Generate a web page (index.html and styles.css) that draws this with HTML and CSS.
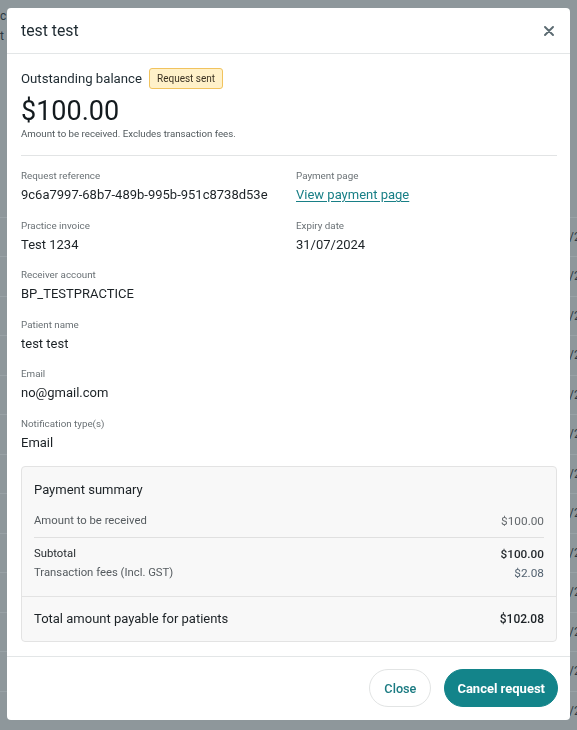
FILE: index.html
```html
<!DOCTYPE html>
<html lang="en">
<head>
<meta charset="utf-8">
<title>Payment request</title>
<link rel="stylesheet" href="styles.css">
</head>
<body>
<div class="page">
  <div class="page-top">
    <div class="page-line">c</div>
    <div class="page-line">t</div>
  </div>
  <div class="page-row"></div>
  <div class="page-row">/2</div>
  <div class="page-row">/2</div>
  <div class="page-row">/2</div>
  <div class="page-row">/2</div>
  <div class="page-row">/2</div>
  <div class="page-row">/2</div>
  <div class="page-row">/2</div>
  <div class="page-row">/2</div>
  <div class="page-row">/2</div>
  <div class="page-row">/2</div>
  <div class="page-row">/2</div>
  <div class="page-row">/2</div>
  <div class="page-row">/2</div>
</div>

<div class="overlay">
  <div class="modal">
    <div class="modal-header">
      <h2 class="modal-title">test test</h2>
      <button class="close-x" aria-label="Close">
        <svg width="10" height="10" viewBox="0 0 10 10"><path d="M1 1 L9 9 M9 1 L1 9" stroke="#5b6a71" stroke-width="1.9" stroke-linecap="round" fill="none"/></svg>
      </button>
    </div>
    <div class="modal-body">
      <div class="balance-row">
        <span class="balance-label">Outstanding balance</span>
        <span class="badge">Request sent</span>
      </div>
      <div class="amount">$100.00</div>
      <div class="amount-note">Amount to be received. Excludes transaction fees.</div>
      <div class="divider"></div>
      <div class="details">
        <div class="item">
          <div class="label">Request reference</div>
          <div class="value">9c6a7997-68b7-489b-995b-951c8738d53e</div>
        </div>
        <div class="item">
          <div class="label">Payment page</div>
          <div class="value"><a class="link" href="#">View payment page</a></div>
        </div>
        <div class="item">
          <div class="label">Practice invoice</div>
          <div class="value">Test 1234</div>
        </div>
        <div class="item">
          <div class="label">Expiry date</div>
          <div class="value">31/07/2024</div>
        </div>
        <div class="item col1">
          <div class="label">Receiver account</div>
          <div class="value">BP_TESTPRACTICE</div>
        </div>
        <div class="item col1">
          <div class="label">Patient name</div>
          <div class="value">test test</div>
        </div>
        <div class="item col1">
          <div class="label">Email</div>
          <div class="value">no@gmail.com</div>
        </div>
        <div class="item col1">
          <div class="label">Notification type(s)</div>
          <div class="value">Email</div>
        </div>
      </div>
      <div class="summary">
        <div class="summary-main">
          <h3 class="summary-title">Payment summary</h3>
          <div class="sum-row first">
            <span class="sum-label">Amount to be received</span>
            <span class="sum-amt">$100.00</span>
          </div>
          <div class="sum-divider"></div>
          <div class="sum-row sub">
            <span class="sum-label strong">Subtotal</span>
            <span class="sum-amt strong">$100.00</span>
          </div>
          <div class="sum-row fees">
            <span class="sum-label">Transaction fees (Incl. GST)</span>
            <span class="sum-amt blue">$2.08</span>
          </div>
        </div>
        <div class="summary-total">
          <span class="total-label">Total amount payable for patients</span>
          <span class="total-amt">$102.08</span>
        </div>
      </div>
    </div>
    <div class="modal-footer">
      <button class="btn btn-secondary">Close</button>
      <button class="btn btn-primary">Cancel request</button>
    </div>
  </div>
</div>
</body>
</html>
```

FILE: styles.css
```css
* { box-sizing: border-box; }

html, body { margin: 0; padding: 0; }

body {
  font-family: Roboto, "Liberation Sans", Arial, sans-serif;
  background: #8e979b;
  overflow: hidden;
  color: #1c2226;
}

/* page behind the backdrop */
.page {
  height: 730px;
  overflow: hidden;
  color: #2a3841;
  font-size: 12px;
}
.page-top {
  height: 178px;
  padding-top: 6px;
  padding-left: 0;
}
.page-line {
  line-height: 20px;
  white-space: nowrap;
}
.page-row {
  height: 39.5px;
  border-bottom: 1px solid #99a2a6;
  display: flex;
  align-items: center;
  padding-left: 569px;
  white-space: nowrap;
}

/* modal */
.overlay {
  position: fixed;
  inset: 0;
  padding: 8px 7px;
}
.modal {
  width: 563px;
  height: 712px;
  background: #ffffff;
  border-radius: 4px;
  display: flex;
  flex-direction: column;
  overflow: hidden;
}
.modal-header {
  height: 46px;
  flex: none;
  border-bottom: 1px solid #e3e6e7;
  display: flex;
  align-items: center;
  justify-content: space-between;
  padding: 0 16px 0 14px;
}
.modal-title {
  margin: 0;
  font-size: 15.8px;
  font-weight: 400;
  color: #1e2a31;
}
.close-x {
  border: 0;
  background: none;
  padding: 0;
  width: 10px;
  height: 10px;
  display: flex;
}

.modal-body {
  flex: 1;
  padding: 13px 13px 14px 14px;
}
.balance-row {
  display: flex;
  align-items: center;
  gap: 7px;
  height: 22px;
}
.balance-label {
  font-size: 13.2px;
  color: #1e2a31;
}
.badge {
  font-size: 10px;
  line-height: 19px;
  height: 21px;
  padding: 0 7px;
  background: #fff1c9;
  border: 1px solid #f1c35e;
  border-radius: 3px;
  color: #3b3222;
}
.amount {
  margin-top: 7px;
  font-size: 27px;
  line-height: 31px;
  color: #131a1e;
}
.amount-note {
  font-size: 9.7px;
  line-height: 14px;
  color: #50585c;
}
.divider {
  margin-top: 14px;
  height: 1px;
  background: #e2e4e5;
}

.details {
  margin-top: 13px;
  display: grid;
  grid-template-columns: 1fr 1fr;
  column-gap: 14px;
  row-gap: 14.5px;
}
.col1 { grid-column: 1; }
.label {
  font-size: 9.8px;
  line-height: 14px;
  color: #6a7175;
  margin-bottom: 3px;
}
.value {
  font-size: 13px;
  line-height: 18px;
  color: #1c2226;
  white-space: nowrap;
}
.link {
  color: #187f86;
  text-decoration: underline;
  text-underline-offset: 2px;
}

.summary {
  margin-top: 14.5px;
  border: 1px solid #e3e3e3;
  border-radius: 4px;
  background: #f8f8f8;
}
.summary-main {
  padding: 14px 12px 15px;
  border-bottom: 1px solid #e3e3e3;
}
.summary-title {
  margin: 0;
  font-size: 13px;
  line-height: 18px;
  font-weight: 400;
  color: #1c2226;
}
.sum-row {
  display: flex;
  justify-content: space-between;
  align-items: center;
  line-height: 16px;
}
.sum-row.first { margin-top: 14px; }
.sum-row.sub { margin-top: 8px; }
.sum-row.fees { margin-top: 3px; }
.sum-label {
  font-size: 11.3px;
  color: #555b5f;
}
.sum-amt {
  font-size: 11.8px;
  color: #64696d;
}
.sum-label.strong, .sum-amt.strong { color: #262b2f; }
.sum-amt.strong { font-weight: 500; }
.sum-amt.blue { color: #536270; }
.sum-divider {
  margin-top: 8px;
  height: 1px;
  background: #e0e0e0;
}
.summary-total {
  padding: 13px 12px;
  display: flex;
  justify-content: space-between;
  align-items: center;
  line-height: 18px;
}
.total-label {
  font-size: 13px;
  color: #1c2226;
}
.total-amt {
  font-size: 12px;
  font-weight: 500;
  color: #1c2226;
}

.modal-footer {
  height: 64px;
  flex: none;
  border-top: 1px solid #e3e6e7;
  display: flex;
  justify-content: flex-end;
  align-items: flex-start;
  gap: 13px;
  padding: 12px 12px 0;
}
.btn {
  height: 38px;
  border-radius: 19px;
  font-family: inherit;
  font-size: 12.7px;
  cursor: pointer;
}
.btn-secondary {
  background: #ffffff;
  border: 1px solid #e2e4e4;
  color: #1b7b82;
  padding: 0 14px;
  font-weight: 500;
}
.btn-primary {
  background: #13848a;
  border: 1px solid #13848a;
  color: #ffffff;
  padding: 0 12px;
  font-size: 13px;
  font-weight: 700;
}
```
